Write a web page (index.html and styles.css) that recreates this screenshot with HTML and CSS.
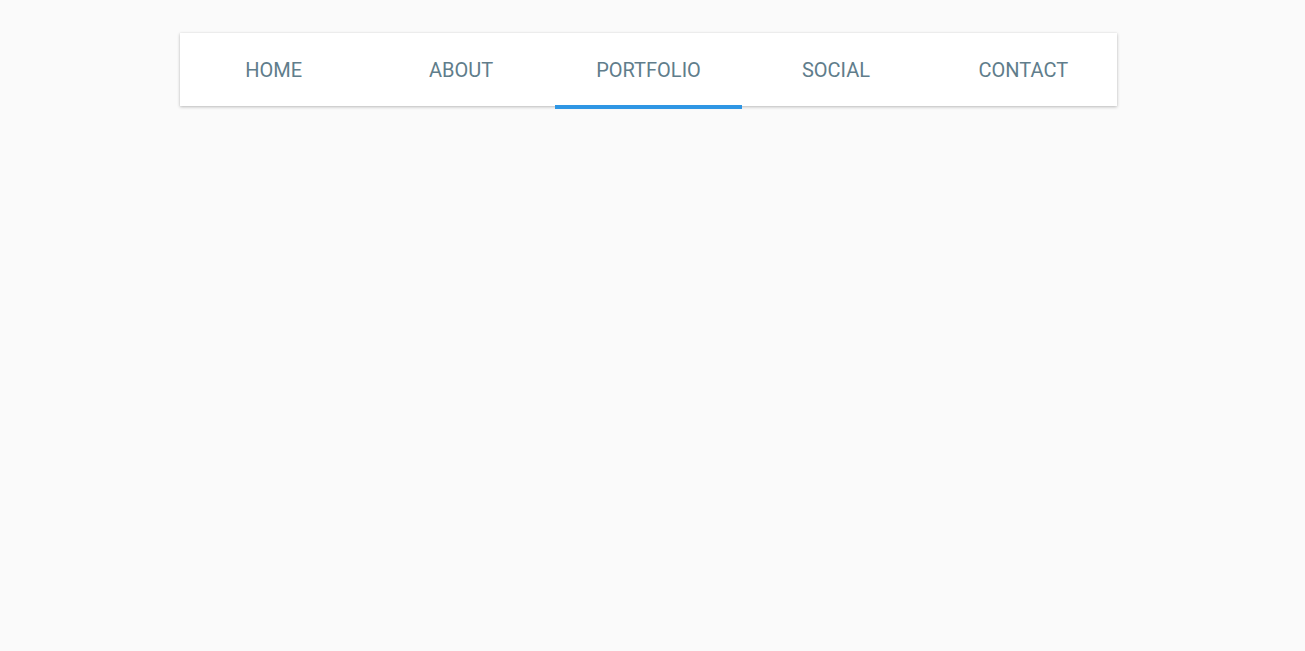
FILE: index.html
```html
<!DOCTYPE html>
<html lang="en">
<head>
    <meta charset="UTF-8">
    <meta name="viewport" content="width=device-width, initial-scale=1.0">
    <title>Tabs</title>
    <link rel="stylesheet" href="styles.css">
</head>
<body>
    <nav class="tabs">
        <a class="tab" href="#">HOME</a>
        <a class="tab" href="#">ABOUT</a>
        <a class="tab active" href="#">PORTFOLIO</a>
        <a class="tab" href="#">SOCIAL</a>
        <a class="tab" href="#">CONTACT</a>
    </nav>
</body>
</html>
```

FILE: styles.css
```css
body {
    font-family: Roboto, "Liberation Sans", sans-serif;
    margin: 0;
    padding: 33px 0 0 180px;
    min-height: 100vh;
    box-sizing: border-box;
    background-color: #fafafa;
}

.tabs {
    display: flex;
    width: 937px;
    height: 73px;
    background-color: #fff;
    box-shadow: 0 1px 3px rgba(0, 0, 0, 0.25), 0 0 1px rgba(0, 0, 0, 0.08);
}

.tab {
    position: relative;
    flex: 1;
    display: flex;
    align-items: center;
    justify-content: center;
    padding-top: 1px;
    color: #607d8b;
    font-size: 20px;
    text-decoration: none;
}

.tab.active::after {
    content: "";
    position: absolute;
    left: 0;
    right: 0;
    bottom: -3px;
    height: 4px;
    background-color: #2f96e4;
}
```
